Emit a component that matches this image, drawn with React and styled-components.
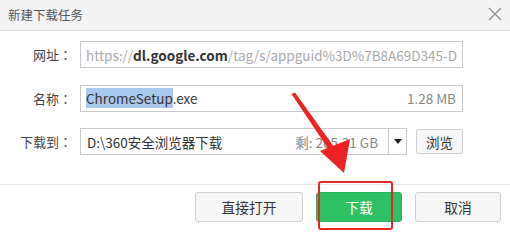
import React from "react";
import styled, { createGlobalStyle } from "styled-components";

const Global = createGlobalStyle`
  html, body { margin: 0; padding: 0; background: #fff; }
  * { box-sizing: border-box; }
`;

const Dialog = styled.div`
  position: relative;
  width: 510px;
  height: 244px;
  background: #fff;
  font-family: "Noto Sans CJK SC", "Noto Sans", sans-serif;
  color: #333;
  overflow: hidden;
`;

const TitleBar = styled.div`
  height: 31px;
  display: flex;
  align-items: center;
  justify-content: space-between;
  padding: 0 8px 2px 8px;
  background: #f4f4f4;
  border-bottom: 1px solid #dcdcdc;
`;

const Title = styled.span`
  font-size: 12.5px;
  color: #555;
`;

const Close = styled.svg`
  width: 14px;
  height: 14px;
  margin-right: 0;
`;

const Form = styled.div`
  display: grid;
  grid-template-columns: 72px auto;
  align-content: start;
  column-gap: 8px;
  row-gap: 16.5px;
  padding: 10px 0 0 0;
  height: 154px;
  border-bottom: 1px solid #e6e6e6;
`;

const Label = styled.div`
  font-size: 13px;
  color: #444;
  text-align: right;
  line-height: 27px;
  height: 27px;
`;

const Colon = styled.span`
  font-family: "Noto Sans CJK TC", sans-serif;
  color: #555;
`;

const Field = styled.div`
  width: ${(p) => p.$w}px;
  height: 27px;
  border: 1px solid #c9c9c9;
  display: flex;
  align-items: center;
  padding: 0 4px 0 5px;
  font-size: 13.5px;
  white-space: nowrap;
  overflow: hidden;
`;

const Main = styled.span`
  flex: 1;
  overflow: hidden;
  white-space: nowrap;
`;

const Dim = styled.span`
  color: #aaa;
`;

const Strong = styled.span`
  color: #333;
  font-weight: 600;
`;

const Sel = styled.span`
  background: #a9c8ee;
`;

const Side = styled.span`
  color: #888;
  padding-right: 2px;
`;

const PathRow = styled.div`
  display: flex;
  align-items: center;
  gap: 9px;
`;

const Combo = styled.div`
  display: flex;
  height: 27px;
  border: 1px solid #c9c9c9;
  width: 327px;
`;

const ComboField = styled.div`
  flex: 1;
  display: flex;
  align-items: center;
  padding: 0 8px 0 6px;
  font-size: 13.5px;
  border-right: 1px solid #c9c9c9;
  white-space: nowrap;
`;

const Arrow = styled.div`
  width: 17px;
  display: flex;
  align-items: center;
  justify-content: center;
`;

const SmallBtn = styled.div`
  width: 47px;
  height: 25px;
  border: 1px solid #cfcfcf;
  border-radius: 2px;
  background: #f6f6f6;
  font-size: 13.5px;
  display: flex;
  align-items: center;
  justify-content: center;
  color: #333;
`;

const Footer = styled.div`
  display: flex;
  justify-content: flex-end;
  gap: 13px;
  padding: 7px 9px 0 0;
`;

const Button = styled.div`
  width: ${(p) => p.$w}px;
  height: 30px;
  border-radius: 3px;
  display: flex;
  align-items: center;
  justify-content: center;
  font-size: 13.75px;
  border: 1px solid ${(p) => (p.$primary ? "#27b55a" : "#cfcfcf")};
  background: ${(p) => (p.$primary ? "#2ec064" : "#f6f6f6")};
  color: ${(p) => (p.$primary ? "#fff" : "#333")};
`;

const Highlight = styled.div`
  position: absolute;
  left: 318px;
  top: 181px;
  width: 75px;
  height: 49px;
  border: 2px solid #e8262a;
  border-radius: 3px;
`;

const Overlay = styled.svg`
  position: absolute;
  left: 0;
  top: 0;
  pointer-events: none;
`;

export default function App() {
  return (
    <>
      <Global />
      <Dialog>
        <TitleBar>
          <Title>新建下载任务</Title>
          <Close viewBox="0 0 14 14">
            <path d="M1 1 L13 13 M13 1 L1 13" stroke="#8a8a8a" strokeWidth="1.2" fill="none" />
          </Close>
        </TitleBar>
        <Form>
          <Label>网址<Colon>：</Colon></Label>
          <Field $w={383}>
            <Main>
              <Dim>https://</Dim>
              <Strong>dl.google.com</Strong>
              <Dim>/tag/s/appguid%3D%7B8A69D345-D</Dim>
            </Main>
          </Field>
          <Label>名称<Colon>：</Colon></Label>
          <Field $w={383}>
            <Main>
              <Sel>ChromeSetup</Sel>.exe
            </Main>
            <Side>1.28 MB</Side>
          </Field>
          <Label>下载到<Colon>：</Colon></Label>
          <PathRow>
            <Combo>
              <ComboField>
                <Main>D:\360安全浏览器下载</Main>
                <Side>剩: 205.31 GB</Side>
              </ComboField>
              <Arrow>
                <svg width="8" height="5" viewBox="0 0 8 5">
                  <path d="M0 0 H8 L4 5 Z" fill="#222" />
                </svg>
              </Arrow>
            </Combo>
            <SmallBtn>浏览</SmallBtn>
          </PathRow>
        </Form>
        <Footer>
          <Button $w={108}>直接打开</Button>
          <Button $w={86} $primary>下载</Button>
          <Button $w={86}>取消</Button>
        </Footer>
        <Highlight />
        <Overlay width="510" height="244" viewBox="0 0 510 244">
          <path d="M291.5 94 L295 92.5 L334 147 L329 150 Z" fill="#ee2222" />
          <path d="M320 151 L350 139 L344 173 Z" fill="#ee2222" />
        </Overlay>
      </Dialog>
    </>
  );
}
